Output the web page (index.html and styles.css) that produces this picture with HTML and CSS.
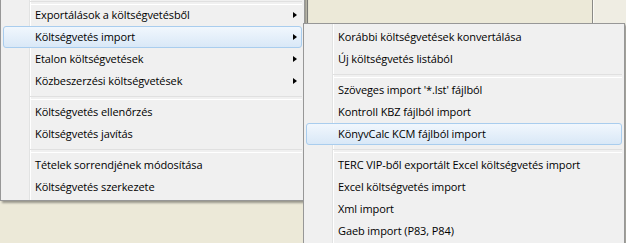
FILE: index.html
```html
<!DOCTYPE html>
<html lang="hu">
<head>
    <meta charset="UTF-8">
    <title>Költségvetés import</title>
    <link rel="stylesheet" href="styles.css">
</head>
<body>
    <div class="desk">
        <div class="desk-left"></div>
        <div class="desk-main"></div>
        <div class="desk-right"></div>
    </div>

    <ul class="menu menu-main">
        <li class="sep sep-top"></li>
        <li class="item has-sub">Exportálások a költségvetésből</li>
        <li class="item has-sub active">Költségvetés import</li>
        <li class="item has-sub">Etalon költségvetések</li>
        <li class="item has-sub">Közbeszerzési költségvetések</li>
        <li class="sep"></li>
        <li class="item">Költségvetés ellenőrzés</li>
        <li class="item">Költségvetés javítás</li>
        <li class="sep"></li>
        <li class="item">Tételek sorrendjének módosítása</li>
        <li class="item">Költségvetés szerkezete</li>
    </ul>

    <ul class="menu menu-sub">
        <li class="item">Korábbi költségvetések konvertálása</li>
        <li class="item">Új költségvetés listából</li>
        <li class="sep"></li>
        <li class="item">Szöveges import '*.lst' fájlból</li>
        <li class="item">Kontroll KBZ fájlból import</li>
        <li class="item active">KönyvCalc KCM fájlból import</li>
        <li class="sep"></li>
        <li class="item">TERC VIP-ből exportált Excel költségvetés import</li>
        <li class="item">Excel költségvetés import</li>
        <li class="item">Xml import</li>
        <li class="item">Gaeb import (P83, P84)</li>
    </ul>
</body>
</html>
```

FILE: styles.css
```css
:root {
    --desk-bg: #ece9d8;
    --menu-bg: #f0f0f0;
    --menu-border: #979797;
    --gutter-line: #e2e3e3;
    --sep-line: #e0e0e0;
    --hover-border: #a9cdee;
    --hover-top: #f1f7fd;
    --hover-bottom: #d9e8f7;
}

* {
    box-sizing: border-box;
}

body {
    margin: 0;
    width: 626px;
    height: 243px;
    overflow: hidden;
    position: relative;
    background: var(--desk-bg);
    font-family: "Open Sans", "Noto Sans", sans-serif;
    font-size: 11px;
    letter-spacing: -0.1px;
    color: #000;
}

/* háttér ablak */
.desk {
    display: flex;
    height: 243px;
}

.desk-left {
    width: 307px;
}

.desk-main {
    flex: 1;
    border-left: 1px solid #8a8a86;
    border-right: 1px solid #8a8a86;
}

.desk-right {
    width: 33px;
    border-left: 1px solid #fbfaf6;
    background: #efede3;
}

/* felugró menük */
.menu {
    position: absolute;
    list-style: none;
    margin: 0;
    padding: 2px;
    border: 1px solid var(--menu-border);
    background:
        linear-gradient(to right,
            transparent 28px,
            var(--gutter-line) 28px, var(--gutter-line) 29px,
            #fff 29px, #fff 30px,
            transparent 30px),
        var(--menu-bg);
    box-shadow: 2px 2px 2px rgba(0, 0, 0, 0.35);
}

.menu-main {
    left: 0;
    top: -6px;
    width: 305px;
}

.menu-sub {
    left: 303px;
    top: 23px;
    width: 322px;
}

.item {
    display: flex;
    align-items: center;
    height: 22px;
    padding-left: 31px;
    padding-right: 4px;
    padding-bottom: 1px;
    border: 1px solid transparent;
    border-radius: 3px;
    white-space: nowrap;
}

.item.has-sub::after {
    content: "";
    margin-left: auto;
    border-left: 4px solid #000;
    border-top: 3.5px solid transparent;
    border-bottom: 3.5px solid transparent;
}

.item.active {
    border-color: var(--hover-border);
    background: linear-gradient(var(--hover-top), var(--hover-bottom));
}

.sep {
    height: 9px;
    margin-left: 27px;
    padding-top: 4px;
}

.sep::before {
    content: "";
    display: block;
    height: 2px;
    border-top: 1px solid var(--sep-line);
    border-bottom: 1px solid #fff;
}

.sep-top {
    height: 7px;
}
```
